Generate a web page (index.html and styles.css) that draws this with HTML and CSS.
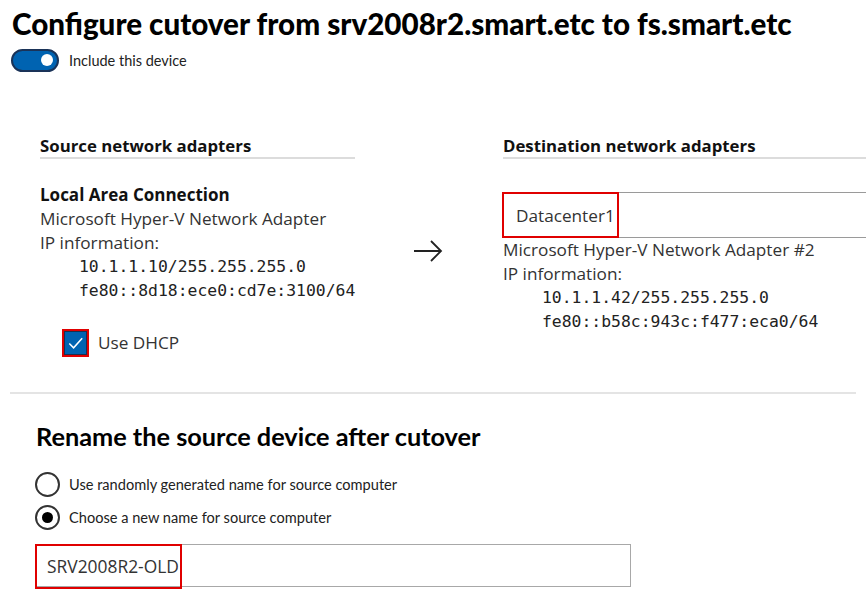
FILE: index.html
```html
<!DOCTYPE html>
<html lang="en">
<head>
<meta charset="utf-8">
<title>Configure cutover</title>
<link rel="stylesheet" href="styles.css">
</head>
<body>
<div class="page">
  <h1 class="title">Configure cutover from srv2008r2.smart.etc to fs.smart.etc</h1>
  <div class="toggle-row">
    <span class="toggle"><span class="knob"></span></span>
    <span class="small-label">Include this device</span>
  </div>

  <div class="adapters">
    <div class="col col-src">
      <div class="col-head">Source network adapters</div>
      <div class="adapter-name">Local Area Connection</div>
      <div class="line">Microsoft Hyper-V Network Adapter</div>
      <div class="line">IP information:</div>
      <div class="mono">10.1.1.10/255.255.255.0</div>
      <div class="mono">fe80::8d18:ece0:cd7e:3100/64</div>
      <div class="check-row">
        <span class="checkbox-wrap">
          <span class="checkbox">
            <svg width="22" height="22" viewBox="0 0 22 22"><path d="M4.5 11.5 L9 16 L18 6" fill="none" stroke="#fff" stroke-width="1.6"/></svg>
          </span>
        </span>
        <span class="line">Use DHCP</span>
      </div>
    </div>
    <div class="col col-arrow">
      <svg class="arrow" width="30" height="24" viewBox="0 0 30 24"><path d="M1 12 H28 M18 2 L28 12 L18 22" fill="none" stroke="#222" stroke-width="1.8"/></svg>
    </div>
    <div class="col col-dst">
      <div class="col-head">Destination network adapters</div>
      <div class="dst-input">
        <span class="dst-value">Datacenter1</span>
        <span class="mark mark-dst"></span>
      </div>
      <div class="line">Microsoft Hyper-V Network Adapter #2</div>
      <div class="line">IP information:</div>
      <div class="mono">10.1.1.42/255.255.255.0</div>
      <div class="mono">fe80::b58c:943c:f477:eca0/64</div>
    </div>
  </div>

  <div class="separator"></div>

  <div class="rename">
    <h2 class="rename-title">Rename the source device after cutover</h2>
    <div class="radio-row">
      <span class="radio"></span>
      <span class="radio-label">Use randomly generated name for source computer</span>
    </div>
    <div class="radio-row">
      <span class="radio radio-on"><span class="dot"></span></span>
      <span class="radio-label">Choose a new name for source computer</span>
    </div>
    <div class="name-input">
      <span class="name-value">SRV2008R2-OLD</span>
      <span class="mark mark-name"></span>
    </div>
  </div>
</div>
</body>
</html>
```

FILE: styles.css
```css
html, body {
  margin: 0;
  padding: 0;
  background: #fff;
  overflow: hidden;
}
.page {
  width: 866px;
  height: 600px;
  overflow: hidden;
  font-family: "Open Sans", "Noto Sans", sans-serif;
  color: #222;
}
.title {
  margin: 0;
  padding: 6px 0 0 12px;
  font-family: "Lato", "Open Sans", sans-serif;
  font-weight: 900;
  font-size: 29.6px;
  line-height: 36px;
  color: #000;
  white-space: nowrap;
}
.toggle-row {
  display: flex;
  align-items: center;
  gap: 10px;
  margin: 6px 0 0 11px;
  height: 24px;
}
.toggle {
  box-sizing: border-box;
  width: 48px;
  height: 23px;
  border-radius: 12px;
  background: #0063b1;
  border: 2px solid #1a3358;
  display: flex;
  align-items: center;
  justify-content: flex-end;
  padding-right: 4px;
}
.knob {
  width: 12px;
  height: 12px;
  border-radius: 50%;
  background: #fff;
}
.small-label {
  font-family: "Lato", sans-serif;
  font-size: 14.5px;
  color: #222;
}
.adapters {
  display: flex;
  margin-top: 64px;
  padding-left: 40px;
}
.col {
  flex-shrink: 0;
}
.col-src {
  width: 315px;
}
.col-arrow {
  width: 148px;
  display: flex;
  justify-content: center;
}
.arrow {
  margin-top: 103px;
  margin-left: -2px;
}
.col-dst {
  width: 420px;
}
.col-head {
  font-weight: 700;
  font-size: 16.8px;
  line-height: 20px;
  color: #111;
  padding-bottom: 1px;
  border-bottom: 2px solid #dcdcdc;
  white-space: nowrap;
}
.adapter-name {
  margin-top: 24px;
  font-weight: 700;
  font-size: 17px;
  line-height: 24px;
  color: #111;
}
.line {
  font-size: 17.2px;
  line-height: 24px;
  color: #333;
  white-space: nowrap;
}
.mono {
  font-family: "DejaVu Sans Mono", "Liberation Mono", monospace;
  font-size: 16.4px;
  line-height: 24px;
  color: #222;
  padding-left: 39px;
  white-space: nowrap;
}
.check-row {
  display: flex;
  align-items: center;
  gap: 9px;
  margin: 26px 0 0 22px;
  height: 28px;
}
.checkbox-wrap {
  box-sizing: border-box;
  width: 27px;
  height: 28px;
  border: 2px solid #e00000;
  display: flex;
  align-items: center;
  justify-content: center;
}
.checkbox {
  box-sizing: border-box;
  width: 23px;
  height: 24px;
  background: #0063b1;
  border: 1px solid #1b2f4f;
  display: flex;
  align-items: center;
  justify-content: center;
}
.dst-input {
  position: relative;
  box-sizing: border-box;
  margin-top: 33px;
  height: 46px;
  border-top: 1px solid #9a9a9a;
  border-bottom: 1px solid #9a9a9a;
  display: flex;
  align-items: center;
  padding-left: 14px;
  margin-left: -1px;
}
.dst-value {
  font-size: 17.2px;
  color: #333;
}
.mark {
  position: absolute;
  box-sizing: border-box;
  border: 2px solid #e00000;
}
.mark-dst {
  left: 0;
  top: -1px;
  width: 117px;
  height: 46px;
}
.separator {
  margin: 35px 0 0 10px;
  width: 846px;
  height: 2px;
  background: #e4e4e4;
}
.rename {
  padding-left: 35px;
}
.rename-title {
  margin: 28px 0 0 1px;
  font-family: "Lato", "Open Sans", sans-serif;
  font-weight: 700;
  font-size: 25.3px;
  line-height: 28px;
  color: #000;
}
.radio-row {
  display: flex;
  align-items: center;
  gap: 9px;
  height: 26px;
  margin-top: 7px;
}
.rename-title + .radio-row {
  margin-top: 21px;
}
.radio {
  box-sizing: border-box;
  width: 25px;
  height: 25px;
  border-radius: 50%;
  border: 2px solid #333;
  display: flex;
  align-items: center;
  justify-content: center;
}
.dot {
  width: 11px;
  height: 11px;
  border-radius: 50%;
  background: #000;
}
.radio-label {
  font-family: "Lato", sans-serif;
  font-size: 14.6px;
  color: #222;
}
.name-input {
  position: relative;
  box-sizing: border-box;
  margin-top: 14px;
  width: 596px;
  height: 43px;
  border: 1px solid #a8a8a8;
  display: flex;
  align-items: center;
  padding-left: 11px;
}
.name-value {
  font-size: 17.4px;
  color: #333;
}
.mark-name {
  left: -1px;
  top: -1px;
  width: 147px;
  height: 45px;
}
```
